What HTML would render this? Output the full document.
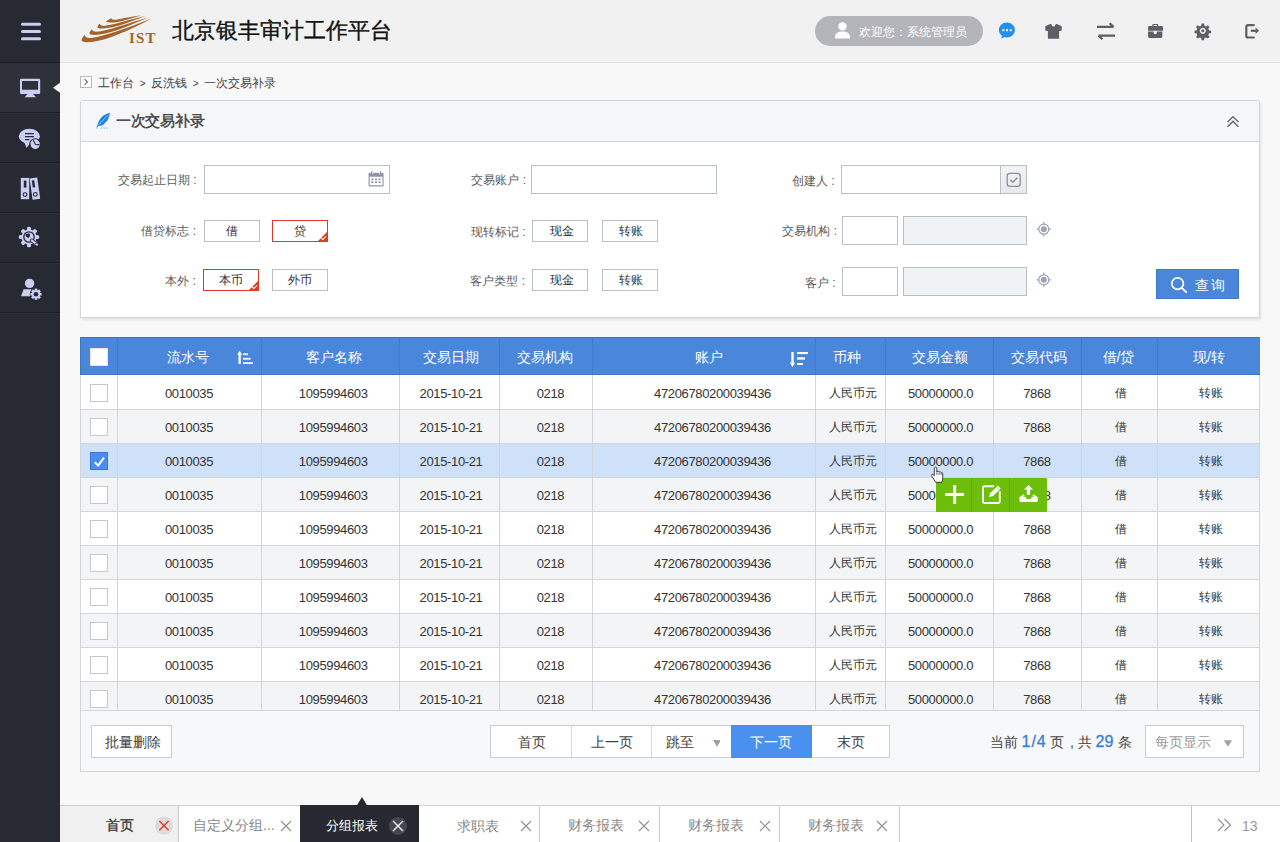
<!DOCTYPE html>
<html><head><meta charset="utf-8">
<style>
*{box-sizing:border-box;margin:0;padding:0}
html,body{width:1280px;height:842px;overflow:hidden}
body{position:relative;background:#f8f8f8;font-family:"Liberation Sans",sans-serif;color:#333}
.a{position:absolute}
#side{left:0;top:0;width:60px;height:842px;background:#272a33}
.si{position:absolute;left:0;width:60px;height:50px;border-top:1px solid #1d1f25;box-shadow:inset 0 1px 0 #2d3037}
#hdr{left:60px;top:0;width:1220px;height:63px;background:#f1f1f1;border-bottom:1px solid #e1e1e1}
.lbl{position:absolute;font-size:12px;color:#5c5c5c;text-align:right;white-space:nowrap}
.inp{position:absolute;border:1px solid #b9bec7;background:#fff;height:29px}
.tg{position:absolute;width:56px;height:22px;border:1px solid #b9bec7;background:#fff;font-size:12px;color:#333;text-align:center;line-height:20px}
.tg.on{border-color:#e03a26}
.th{position:absolute;top:339px;height:37px;line-height:37px;text-align:center;color:#fff;font-size:14px;white-space:nowrap}
.td{position:absolute;height:33px;padding-top:1px;line-height:33px;text-align:center;color:#333;font-size:13px;letter-spacing:-0.35px;white-space:nowrap}
.td.cj{font-size:12px;letter-spacing:0}
.btn{position:absolute;background:#fff;border:1px solid #c9ccd1;font-size:14px;color:#444;text-align:center;line-height:31px;white-space:nowrap}
.pg{position:absolute;top:727px;height:31px;line-height:31px;font-size:14px;color:#444;text-align:center;white-space:nowrap}
.tb{position:absolute;top:817px;font-size:14px;white-space:nowrap}
.pi{position:absolute;top:734px;font-size:14px;line-height:16px;color:#444;white-space:nowrap}
.pn{font-size:16px;color:#3b7fd4;top:733px;line-height:18px;-webkit-text-stroke:0.3px #3b7fd4}
.tg.on:after{content:"";position:absolute;right:-1px;bottom:-1px;width:0;height:0;border-left:11px solid transparent;border-bottom:11px solid #e03a26}
.ck{position:absolute;right:1px;bottom:2px;width:5px;height:3px;border-left:1.2px solid #fff;border-bottom:1.2px solid #fff;transform:rotate(-45deg);z-index:2}
</style></head><body>

<!-- SIDEBAR -->
<div id="side" class="a">
  <div class="si" style="top:62px;background:#2e3139"></div>
  <div class="si" style="top:112px"></div>
  <div class="si" style="top:162px"></div>
  <div class="si" style="top:212px"></div>
  <div class="si" style="top:262px"></div>
  <div class="si" style="top:312px;height:2px"></div>
</div>
<svg class="a" style="left:0;top:0" width="60" height="320" viewBox="0 0 60 320">
 <g fill="#c8cff3">
  <rect x="21" y="22.7" width="20" height="3" rx="1.5"/>
  <rect x="21" y="30" width="20" height="3" rx="1.5"/>
  <rect x="21" y="37.3" width="20" height="3" rx="1.5"/>
  <!-- monitor -->
  <path fill-rule="evenodd" d="M21.2 78.8h17.8a1.2 1.2 0 0 1 1.2 1.2v12.8a1.2 1.2 0 0 1-1.2 1.2h-17.8a1.2 1.2 0 0 1-1.2-1.2v-12.8a1.2 1.2 0 0 1 1.2-1.2zM22 81v8.8h16.1v-8.8z"/>
  <path d="M27.5 94h5.5l3 3.2h-11.3z"/>
  <!-- chat -->
  <ellipse cx="29.35" cy="136.3" rx="10.55" ry="7.5"/>
  <path d="M24 141.5l2.6 6.5 3.4-4.8z"/>
  <circle cx="35.2" cy="144.3" r="4.8"/>
 </g>
 <g stroke="#272a33" stroke-width="1.1" fill="none">
  <path d="M25 133.6h9M25 136.6h9M25 139.6h4.3"/>
  <circle cx="35.2" cy="144.3" r="5.5"/>
  <path d="M33.3 140.2l2 4.1 4.4.6" />
 </g>
 <!-- binders -->
 <g fill="#c8cff3">
  <rect x="20.8" y="177.9" width="8.4" height="21.3"/>
  <path d="M29.6 178.6l7.6-1 3 21.1-7.6 1z"/>
 </g>
 <g fill="#272a33">
  <rect x="23.8" y="180.6" width="2.6" height="7"/>
  <path d="M31.8 180.6l2.4-.3 1 7-2.4.3z"/>
 </g>
 <g fill="none" stroke="#272a33" stroke-width="1.1">
  <circle cx="25" cy="194.6" r="1.9"/>
  <circle cx="35.3" cy="194.4" r="1.9"/>
 </g>
 <!-- gear wrench -->
 <g fill="#c8cff3">
  <circle cx="29" cy="237" r="7.6"/>
  <g id="teeth">
   <rect x="27" y="226.8" width="4" height="4" rx="1.5"/>
   <rect x="27" y="243.2" width="4" height="4" rx="1.5"/>
   <rect x="18.8" y="235" width="4" height="4" rx="1.5"/>
   <rect x="35.2" y="235" width="4" height="4" rx="1.5"/>
   <rect x="27" y="226.8" width="4" height="4" rx="1.5" transform="rotate(45 29 237)"/>
   <rect x="27" y="226.8" width="4" height="4" rx="1.5" transform="rotate(-45 29 237)"/>
   <rect x="27" y="243.2" width="4" height="4" rx="1.5" transform="rotate(45 29 237)"/>
   <rect x="27" y="243.2" width="4" height="4" rx="1.5" transform="rotate(-45 29 237)"/>
  </g>
 </g>
 <circle cx="29" cy="237" r="5.2" fill="none" stroke="#272a33" stroke-width="1.3"/>
 <path d="M25.6 234.2a3 3 0 0 0 3.2 3.6a3 3 0 0 0 .3-4.6z" fill="#272a33"/>
 <path d="M31.8 240.4l5.2 4.3" stroke="#272a33" stroke-width="3.8" stroke-linecap="round"/>
 <path d="M31.8 240.4l5.2 4.3" stroke="#c8cff3" stroke-width="2.1" stroke-linecap="round"/>
 <circle cx="35.8" cy="243.6" r=".6" fill="#272a33"/>
 <!-- user gear -->
 <g fill="#c8cff3">
  <circle cx="29.6" cy="283.4" r="4.7"/>
  <path d="M23.6 289.3h7.8v7h-10.4z"/>
 </g>
 <circle cx="36" cy="294.2" r="6.2" fill="#272a33"/>
 <circle cx="36" cy="294.2" r="4.2" fill="#c8cff3"/>
 <g fill="#c8cff3" transform="translate(36 294.2)">
  <rect x="-1.3" y="-5.6" width="2.6" height="2.6"/>
  <rect x="-1.3" y="3" width="2.6" height="2.6"/>
  <rect x="-5.6" y="-1.3" width="2.6" height="2.6"/>
  <rect x="3" y="-1.3" width="2.6" height="2.6"/>
  <rect x="-1.3" y="-5.6" width="2.6" height="2.6" transform="rotate(45)"/>
  <rect x="-1.3" y="-5.6" width="2.6" height="2.6" transform="rotate(-45)"/>
  <rect x="-1.3" y="3" width="2.6" height="2.6" transform="rotate(45)"/>
  <rect x="-1.3" y="3" width="2.6" height="2.6" transform="rotate(-45)"/>
 </g>
 <circle cx="36" cy="294.2" r="2.3" fill="#272a33"/>
 <path d="M53 87.7l7-5v10z" fill="#f8f8f9"/>
</svg>
<!-- HEADER -->
<div id="hdr" class="a"></div>
<svg class="a" style="left:78px;top:10px" width="80" height="38" viewBox="78 10 80 38">
 <g fill="#a3642c">
  <path d="M84.5 35C82.3 37.5 80.2 40.8 83.2 41.8C97 44.5 128 31.5 151.5 18.4C128 28 100 37.6 89 38.1C86.8 38.1 85.5 36.8 84.5 35Z"/>
  <path d="M91.8 29.6C89.6 31.8 88 34.2 91.6 34.8C107 36 128 26 148.5 17.2C127 23.5 108 31 96 31.7C94 31.7 92.8 31 91.8 29.6Z"/>
  <path d="M99.6 23.8C97.6 25.8 96 28 99.5 28.4C113 29.5 128 22.5 145.5 16.1C128 19.8 114 25.3 103.5 25.9C101.6 25.9 100.5 25 99.6 23.8Z"/>
  <path d="M111.3 18.2C108.5 19.6 104.2 21.6 107.5 22.3C118 23.3 128 19 140.8 15.4C128 16.8 119 19.5 114.3 19.8C112.7 19.8 111.8 19.2 111.3 18.2Z"/>
 </g>
 <text x="129" y="42.8" font-family="Liberation Serif" font-size="15" font-weight="bold" fill="#a3642c" letter-spacing="1.1">IST</text>
</svg>
<div class="a" style="left:171.5px;top:15.5px;font-size:22px;color:#111;-webkit-text-stroke:0.35px #111;white-space:nowrap">北京银丰审计工作平台</div>
<div class="a" style="left:815px;top:16px;width:168px;height:30px;border-radius:15px;background:#b4b4bb"></div>
<svg class="a" style="left:833px;top:20px" width="20" height="20" viewBox="833 20 20 20">
 <circle cx="842.5" cy="26.4" r="4.2" fill="#fff"/>
 <path d="M835 38.4v-1.6c0-3.2 3-5.2 7.5-5.2s7.5 2 7.5 5.2v1.6z" fill="#fff"/>
</svg>
<div class="a" style="left:859px;top:24px;font-size:12px;color:#fff;white-space:nowrap">欢迎您：系统管理员</div>
<svg class="a" style="left:990px;top:14px" width="280" height="34" viewBox="990 14 280 34">
 <!-- message -->
 <path d="M1006.9 22.6c4.5 0 8 3.3 8 7.4s-3.5 7.4-8 7.4c-.9 0-1.7-.1-2.5-.4l-3.1 1.8.6-3.1c-1.9-1.4-3-3.4-3-5.7 0-4.1 3.5-7.4 8-7.4z" fill="#2290ec"/>
 <g fill="#fff"><rect x="1002.4" y="29.2" width="2" height="2"/><rect x="1006" y="29.2" width="2" height="2"/><rect x="1009.7" y="29.2" width="2" height="2"/></g>
 <g fill="#5e5e66">
  <!-- shirt -->
  <path d="M1050 24h1.2c.5 1.6 1.3 2.6 2.3 2.6s1.8-1 2.3-2.6h1.2l4.7 2.2v4.4l-2.6.6v7.6h-11.2v-7.6l-2.6-.6v-4.4z"/>
  <!-- briefcase -->
  <path fill-rule="evenodd" d="M1152.4 26v-1.2c0-.5.4-.9.9-.9h3.9c.5 0 .9.4.9.9v1.2h3.6c.7 0 1.3.6 1.3 1.3v3.4h-14.9v-3.4c0-.7.6-1.3 1.3-1.3zM1153.7 25.1v.9h3.1v-.9z"/>
  <path d="M1148.1 31.6h5.4v.9a1.7 1.7 0 0 0 3.4 0v-.9h5.4v5c0 .7-.6 1.3-1.3 1.3h-11.6c-.7 0-1.3-.6-1.3-1.3z"/>
  <!-- gear -->
  <path fill-rule="evenodd" d="M1202.8 23.6l1.2 0 .5 2.2 1.4.6 1.9-1.2 1.7 1.7-1.2 1.9.6 1.4 2.2.5v2.4l-2.2.5-.6 1.4 1.2 1.9-1.7 1.7-1.9-1.2-1.4.6-.5 2.2h-2.4l-.5-2.2-1.4-.6-1.9 1.2-1.7-1.7 1.2-1.9-.6-1.4-2.2-.5v-2.4l2.2-.5.6-1.4-1.2-1.9 1.7-1.7 1.9 1.2 1.4-.6.5-2.2zM1202.8 27.7a3.1 3.1 0 1 0 .01 0z"/>
  <circle cx="1202.8" cy="30.8" r="1.5"/>
 </g>
 <g fill="none" stroke="#5e5e66" stroke-width="2.2">
  <path d="M1097 26.9h16.5M1109.6 23.2l4 3.7"/>
  <path d="M1115 35.6h-16.5M1102.4 39.3l-4-3.7"/>
  <path d="M1253.8 25.1h-5.7c-1 0-1.8.8-1.8 1.8v8.8c0 1 .8 1.8 1.8 1.8h5.7" stroke-linecap="round"/>
  <path d="M1250.8 30.8h6"/>
 </g>
 <path d="M1255.6 27.6l3.4 3.2-3.4 3.2z" fill="#5e5e66"/>
</svg>
<!-- BREADCRUMB -->
<div class="a" style="left:80px;top:76px;width:12px;height:12px;border:1px solid #b9b9b9;background:#fff"></div>
<svg class="a" style="left:80px;top:76px" width="12" height="12"><path d="M4.6 3.2l2.8 2.8-2.8 2.8" fill="none" stroke="#666" stroke-width="1.1"/></svg>
<div class="a" style="left:98px;top:75px;font-size:12px;color:#444;white-space:nowrap;word-spacing:2.3px">工作台 <span style="font-size:10px">&gt;</span> 反洗钱 <span style="font-size:10px">&gt;</span> 一次交易补录</div>
<!-- QUERY PANEL -->
<div class="a" style="left:80px;top:100px;width:1180px;height:218px;background:#fff;border:1px solid #d3d5d9;border-radius:3px 3px 0 0;box-shadow:1px 2px 3px rgba(0,0,0,.09)"></div>
<div class="a" style="left:81px;top:101px;width:1178px;height:41px;background:#f5f6f8;border-bottom:1px solid #d3d5d9;border-radius:3px 3px 0 0"></div>
<svg class="a" style="left:94px;top:110px" width="20" height="22" viewBox="94 110 20 22">
 <path d="M110 113C106 113.6 101.6 116.2 99.4 120.2C98.3 122.2 97.7 124 97.3 125.4L96.5 127L97.3 127.4L98.3 125.9C100.6 126.1 103.3 125.3 105.1 123.6L103.9 123.3L106.2 122C108 120 109.3 116.5 110 113Z" fill="#1a84e4"/>
 <path d="M108.2 115.2C105 118 101.5 121.5 98.6 125" fill="none" stroke="#f5f6f8" stroke-width=".6"/>
 <g fill="#4a9be8"><rect x="96.5" y="127.6" width="1" height="1"/><rect x="100.7" y="127.6" width="1" height="1"/><rect x="103.6" y="127.6" width="1" height="1"/><rect x="106.2" y="127.6" width="1" height="1"/></g>
</svg>
<div class="a" style="left:116px;top:112px;font-size:15px;color:#444;-webkit-text-stroke:0.45px #444;letter-spacing:-0.3px;white-space:nowrap">一次交易补录</div>
<svg class="a" style="left:1224px;top:112px" width="18" height="18" viewBox="1224 112 18 18">
 <path d="M1227.5 122l5.5-5.3 5.5 5.3M1227.5 126.7l5.5-5.3 5.5 5.3" fill="none" stroke="#6b6e73" stroke-width="1.5"/>
</svg>

<div class="lbl" style="left:99.5px;top:172px;width:97px">交易起止日期 :</div>
<div class="inp" style="left:204px;top:165px;width:186px"></div>
<svg class="a" style="left:367px;top:170px" width="18" height="18" viewBox="367 170 18 18">
 <path fill="#8e93a6" fill-rule="evenodd" d="M369.8 172.8h1.7v-1.2h.9v1.2h7.4v-1.2h.9v1.2h1.7c.7 0 1.2.5 1.2 1.2v11.4c0 .7-.5 1.2-1.2 1.2h-12.6c-.7 0-1.2-.5-1.2-1.2v-11.4c0-.7.5-1.2 1.2-1.2zM369.7 176.7v8.6h12.8v-8.6z"/>
 <g fill="#8e93a6"><rect x="371.3" y="178.6" width="2.2" height="1.6"/><rect x="375" y="178.6" width="2.2" height="1.6"/><rect x="378.6" y="178.6" width="2" height="1.6"/><rect x="371.3" y="181.4" width="2.2" height="1.6"/><rect x="375" y="181.4" width="2.2" height="1.6"/><rect x="378.6" y="181.4" width="2" height="1.6"/></g>
 <g fill="#fff"><rect x="372.3" y="171.6" width="1" height="2.4"/><rect x="378.9" y="171.6" width="1" height="2.4"/></g>
 <g fill="#8e93a6"><rect x="371.5" y="171" width=".9" height="2.2"/><rect x="379.8" y="171" width=".9" height="2.2"/></g>
</svg>
<div class="lbl" style="left:99px;top:223px;width:97px">借贷标志 :</div>
<div class="tg" style="left:204px;top:220px">借</div>
<div class="tg on" style="left:272px;top:220px">贷<i class="ck"></i></div>
<div class="lbl" style="left:99px;top:273px;width:97px">本外 :</div>
<div class="tg on" style="left:203px;top:269px">本币<i class="ck"></i></div>
<div class="tg" style="left:272px;top:269px">外币</div>

<div class="lbl" style="left:430px;top:172px;width:96px">交易账户 :</div>
<div class="inp" style="left:531px;top:165px;width:186px"></div>
<div class="lbl" style="left:429.5px;top:223.5px;width:96px">现转标记 :</div>
<div class="tg" style="left:532px;top:220px;padding-left:3px">现金</div>
<div class="tg" style="left:602px;top:220px;padding-left:2px">转账</div>
<div class="lbl" style="left:429px;top:273px;width:96px">客户类型 :</div>
<div class="tg" style="left:532px;top:269px;padding-left:3px">现金</div>
<div class="tg" style="left:602px;top:269px;padding-left:2px">转账</div>

<div class="lbl" style="left:738.5px;top:173px;width:96px">创建人 :</div>
<div class="inp" style="left:841px;top:165px;width:186px"></div>
<div class="a" style="left:1000px;top:165px;width:27px;height:29px;background:linear-gradient(#f3f3f4,#e9eaec);border:1px solid #b9bec7"></div>
<svg class="a" style="left:1005px;top:171px" width="18" height="18" viewBox="1005 171 18 18">
 <rect x="1007.2" y="173.4" width="13" height="13" rx="2.6" fill="none" stroke="#8a8f9c" stroke-width="1.3"/>
 <path d="M1010.3 179.8l2.6 2.5 4.4-4.6" fill="none" stroke="#8a8f9c" stroke-width="1.5"/>
</svg>
<div class="lbl" style="left:741px;top:223px;width:96px">交易机构 :</div>
<div class="inp" style="left:842px;top:216px;width:56px"></div>
<div class="inp" style="left:903px;top:216px;width:124px;background:#f0f3f6"></div>
<div class="lbl" style="left:739.5px;top:275px;width:96px">客户 :</div>
<div class="inp" style="left:842px;top:267px;width:56px"></div>
<div class="inp" style="left:903px;top:267px;width:124px;background:#f0f3f6"></div>
<svg class="a" style="left:1034px;top:219px" width="20" height="72" viewBox="1034 219 20 72">
 <g id="loc" fill="none" stroke="#9ea3b3" stroke-width="1.2"><circle cx="1043.8" cy="229.2" r="5"/><path d="M1043.8 222v2.4M1043.8 234v2.4M1036.6 229.2h2.4M1048.6 229.2h2.4"/></g>
 <circle cx="1043.8" cy="229.2" r="3" fill="#9ea3b3"/>
 <g fill="none" stroke="#9ea3b3" stroke-width="1.2"><circle cx="1043.8" cy="279.8" r="5"/><path d="M1043.8 272.6v2.4M1043.8 284.6v2.4M1036.6 279.8h2.4M1048.6 279.8h2.4"/></g>
 <circle cx="1043.8" cy="279.8" r="3" fill="#9ea3b3"/>
</svg>

<div class="a" style="left:1156px;top:269px;width:83px;height:30px;background:#4a87da;border:1px solid #3f7acb"></div>
<svg class="a" style="left:1168px;top:274px" width="22" height="22" viewBox="1168 274 22 22">
 <circle cx="1177.6" cy="283.6" r="5.8" fill="none" stroke="#fff" stroke-width="1.7"/>
 <path d="M1181.8 287.8l4.4 4.4" stroke="#fff" stroke-width="1.8" stroke-linecap="round"/>
</svg>
<div class="a" style="left:1195px;top:276.5px;font-size:14px;color:#fff;letter-spacing:1.5px;white-space:nowrap">查询</div>

<!-- TABLE -->
<div class="a" style="left:80px;top:337px;width:1180px;height:435px;border:1px solid #d3d5d9;background:#f7f8fa"></div>
<div class="a" style="left:80px;top:337px;width:1180px;height:38px;background:#4a87da;border-bottom:1px solid #3b76c8;border-top:1px solid #3471c6;border-left:1px solid #3b76c8"></div>
<div class="a" style="left:117px;top:337px;width:1px;height:37px;background:#3f7bcb"></div>
<div class="a" style="left:261px;top:337px;width:1px;height:37px;background:#3f7bcb"></div>
<div class="a" style="left:399px;top:337px;width:1px;height:37px;background:#3f7bcb"></div>
<div class="a" style="left:499px;top:337px;width:1px;height:37px;background:#3f7bcb"></div>
<div class="a" style="left:592px;top:337px;width:1px;height:37px;background:#3f7bcb"></div>
<div class="a" style="left:815px;top:337px;width:1px;height:37px;background:#3f7bcb"></div>
<div class="a" style="left:885px;top:337px;width:1px;height:37px;background:#3f7bcb"></div>
<div class="a" style="left:993px;top:337px;width:1px;height:37px;background:#3f7bcb"></div>
<div class="a" style="left:1081px;top:337px;width:1px;height:37px;background:#3f7bcb"></div>
<div class="a" style="left:1157px;top:337px;width:1px;height:37px;background:#3f7bcb"></div>
<div class="a" style="left:90px;top:348px;width:18px;height:18px;background:#fff;border:1px solid #e8e2d8"></div>
<div class="th" style="left:115.6px;width:144px">流水号</div>
<div class="th" style="left:264.6px;width:138px">客户名称</div>
<div class="th" style="left:400.7px;width:100px">交易日期</div>
<div class="th" style="left:498px;width:93px">交易机构</div>
<div class="th" style="left:597.7px;width:223px">账户</div>
<div class="th" style="left:812px;width:70px">币种</div>
<div class="th" style="left:885.7px;width:108px">交易金额</div>
<div class="th" style="left:994.9px;width:88px">交易代码</div>
<div class="th" style="left:1080.5px;width:76px">借/贷</div>
<div class="th" style="left:1157.85px;width:102px">现/转</div>
<div class="a" style="left:81px;top:375px;width:1178px;height:1px;background:#fff"></div>
<div class="a" style="left:117px;top:375px;width:1px;height:1px;background:#d3d5d9"></div>
<div class="a" style="left:261px;top:375px;width:1px;height:1px;background:#d3d5d9"></div>
<div class="a" style="left:399px;top:375px;width:1px;height:1px;background:#d3d5d9"></div>
<div class="a" style="left:499px;top:375px;width:1px;height:1px;background:#d3d5d9"></div>
<div class="a" style="left:592px;top:375px;width:1px;height:1px;background:#d3d5d9"></div>
<div class="a" style="left:815px;top:375px;width:1px;height:1px;background:#d3d5d9"></div>
<div class="a" style="left:885px;top:375px;width:1px;height:1px;background:#d3d5d9"></div>
<div class="a" style="left:993px;top:375px;width:1px;height:1px;background:#d3d5d9"></div>
<div class="a" style="left:1081px;top:375px;width:1px;height:1px;background:#d3d5d9"></div>
<div class="a" style="left:1157px;top:375px;width:1px;height:1px;background:#d3d5d9"></div>
<div class="a" style="left:81px;top:376px;width:1178px;height:334px;overflow:hidden">
<div class="a" style="left:0;top:0px;width:1178px;height:34px;background:#fff;border-bottom:1px solid #d3d5d9"></div>
<div class="a" style="left:9px;top:8px;width:18px;height:18px;background:#fff;border:1px solid #c6c7ca"></div>
<div class="td" style="left:36px;top:0px;width:144px">0010035</div>
<div class="td" style="left:183.2px;top:0px;width:138px">1095994603</div>
<div class="td" style="left:320px;top:0px;width:100px">2015-10-21</div>
<div class="td" style="left:423px;top:0px;width:93px">0218</div>
<div class="td" style="left:520px;top:0px;width:223px">47206780200039436</div>
<div class="td cj" style="left:737px;top:0px;width:70px">人民币元</div>
<div class="td" style="left:805.5px;top:0px;width:108px">50000000.0</div>
<div class="td" style="left:912px;top:0px;width:88px">7868</div>
<div class="td cj" style="left:1001.6px;top:0px;width:76px">借</div>
<div class="td cj" style="left:1078.8px;top:0px;width:102px">转账</div>
<div class="a" style="left:0;top:34px;width:1178px;height:34px;background:#f3f4f6;border-bottom:1px solid #d3d5d9"></div>
<div class="a" style="left:9px;top:42px;width:18px;height:18px;background:#fff;border:1px solid #c6c7ca"></div>
<div class="td" style="left:36px;top:34px;width:144px">0010035</div>
<div class="td" style="left:183.2px;top:34px;width:138px">1095994603</div>
<div class="td" style="left:320px;top:34px;width:100px">2015-10-21</div>
<div class="td" style="left:423px;top:34px;width:93px">0218</div>
<div class="td" style="left:520px;top:34px;width:223px">47206780200039436</div>
<div class="td cj" style="left:737px;top:34px;width:70px">人民币元</div>
<div class="td" style="left:805.5px;top:34px;width:108px">50000000.0</div>
<div class="td" style="left:912px;top:34px;width:88px">7868</div>
<div class="td cj" style="left:1001.6px;top:34px;width:76px">借</div>
<div class="td cj" style="left:1078.8px;top:34px;width:102px">转账</div>
<div class="a" style="left:0;top:68px;width:1178px;height:34px;background:#cee1f8;border-bottom:1px solid #d3d5d9"></div>
<div class="a" style="left:9px;top:76px;width:18px;height:18px;background:#4a8cf0;border:1px solid #3a76d4"><svg width="16" height="16" viewBox="0 0 16 16" style="position:absolute;left:0;top:0"><path d="M3.8 9.2 L7.2 12.4 L13 4.6" fill="none" stroke="#fff" stroke-width="2"/></svg></div>
<div class="td" style="left:36px;top:68px;width:144px">0010035</div>
<div class="td" style="left:183.2px;top:68px;width:138px">1095994603</div>
<div class="td" style="left:320px;top:68px;width:100px">2015-10-21</div>
<div class="td" style="left:423px;top:68px;width:93px">0218</div>
<div class="td" style="left:520px;top:68px;width:223px">47206780200039436</div>
<div class="td cj" style="left:737px;top:68px;width:70px">人民币元</div>
<div class="td" style="left:805.5px;top:68px;width:108px">50000000.0</div>
<div class="td" style="left:912px;top:68px;width:88px">7868</div>
<div class="td cj" style="left:1001.6px;top:68px;width:76px">借</div>
<div class="td cj" style="left:1078.8px;top:68px;width:102px">转账</div>
<div class="a" style="left:0;top:102px;width:1178px;height:34px;background:#f3f4f6;border-bottom:1px solid #d3d5d9"></div>
<div class="a" style="left:9px;top:110px;width:18px;height:18px;background:#fff;border:1px solid #c6c7ca"></div>
<div class="td" style="left:36px;top:102px;width:144px">0010035</div>
<div class="td" style="left:183.2px;top:102px;width:138px">1095994603</div>
<div class="td" style="left:320px;top:102px;width:100px">2015-10-21</div>
<div class="td" style="left:423px;top:102px;width:93px">0218</div>
<div class="td" style="left:520px;top:102px;width:223px">47206780200039436</div>
<div class="td cj" style="left:737px;top:102px;width:70px">人民币元</div>
<div class="td" style="left:805.5px;top:102px;width:108px">50000000.0</div>
<div class="td" style="left:912px;top:102px;width:88px">7868</div>
<div class="td cj" style="left:1001.6px;top:102px;width:76px">借</div>
<div class="td cj" style="left:1078.8px;top:102px;width:102px">转账</div>
<div class="a" style="left:0;top:136px;width:1178px;height:34px;background:#fff;border-bottom:1px solid #d3d5d9"></div>
<div class="a" style="left:9px;top:144px;width:18px;height:18px;background:#fff;border:1px solid #c6c7ca"></div>
<div class="td" style="left:36px;top:136px;width:144px">0010035</div>
<div class="td" style="left:183.2px;top:136px;width:138px">1095994603</div>
<div class="td" style="left:320px;top:136px;width:100px">2015-10-21</div>
<div class="td" style="left:423px;top:136px;width:93px">0218</div>
<div class="td" style="left:520px;top:136px;width:223px">47206780200039436</div>
<div class="td cj" style="left:737px;top:136px;width:70px">人民币元</div>
<div class="td" style="left:805.5px;top:136px;width:108px">50000000.0</div>
<div class="td" style="left:912px;top:136px;width:88px">7868</div>
<div class="td cj" style="left:1001.6px;top:136px;width:76px">借</div>
<div class="td cj" style="left:1078.8px;top:136px;width:102px">转账</div>
<div class="a" style="left:0;top:170px;width:1178px;height:34px;background:#f3f4f6;border-bottom:1px solid #d3d5d9"></div>
<div class="a" style="left:9px;top:178px;width:18px;height:18px;background:#fff;border:1px solid #c6c7ca"></div>
<div class="td" style="left:36px;top:170px;width:144px">0010035</div>
<div class="td" style="left:183.2px;top:170px;width:138px">1095994603</div>
<div class="td" style="left:320px;top:170px;width:100px">2015-10-21</div>
<div class="td" style="left:423px;top:170px;width:93px">0218</div>
<div class="td" style="left:520px;top:170px;width:223px">47206780200039436</div>
<div class="td cj" style="left:737px;top:170px;width:70px">人民币元</div>
<div class="td" style="left:805.5px;top:170px;width:108px">50000000.0</div>
<div class="td" style="left:912px;top:170px;width:88px">7868</div>
<div class="td cj" style="left:1001.6px;top:170px;width:76px">借</div>
<div class="td cj" style="left:1078.8px;top:170px;width:102px">转账</div>
<div class="a" style="left:0;top:204px;width:1178px;height:34px;background:#fff;border-bottom:1px solid #d3d5d9"></div>
<div class="a" style="left:9px;top:212px;width:18px;height:18px;background:#fff;border:1px solid #c6c7ca"></div>
<div class="td" style="left:36px;top:204px;width:144px">0010035</div>
<div class="td" style="left:183.2px;top:204px;width:138px">1095994603</div>
<div class="td" style="left:320px;top:204px;width:100px">2015-10-21</div>
<div class="td" style="left:423px;top:204px;width:93px">0218</div>
<div class="td" style="left:520px;top:204px;width:223px">47206780200039436</div>
<div class="td cj" style="left:737px;top:204px;width:70px">人民币元</div>
<div class="td" style="left:805.5px;top:204px;width:108px">50000000.0</div>
<div class="td" style="left:912px;top:204px;width:88px">7868</div>
<div class="td cj" style="left:1001.6px;top:204px;width:76px">借</div>
<div class="td cj" style="left:1078.8px;top:204px;width:102px">转账</div>
<div class="a" style="left:0;top:238px;width:1178px;height:34px;background:#f3f4f6;border-bottom:1px solid #d3d5d9"></div>
<div class="a" style="left:9px;top:246px;width:18px;height:18px;background:#fff;border:1px solid #c6c7ca"></div>
<div class="td" style="left:36px;top:238px;width:144px">0010035</div>
<div class="td" style="left:183.2px;top:238px;width:138px">1095994603</div>
<div class="td" style="left:320px;top:238px;width:100px">2015-10-21</div>
<div class="td" style="left:423px;top:238px;width:93px">0218</div>
<div class="td" style="left:520px;top:238px;width:223px">47206780200039436</div>
<div class="td cj" style="left:737px;top:238px;width:70px">人民币元</div>
<div class="td" style="left:805.5px;top:238px;width:108px">50000000.0</div>
<div class="td" style="left:912px;top:238px;width:88px">7868</div>
<div class="td cj" style="left:1001.6px;top:238px;width:76px">借</div>
<div class="td cj" style="left:1078.8px;top:238px;width:102px">转账</div>
<div class="a" style="left:0;top:272px;width:1178px;height:34px;background:#fff;border-bottom:1px solid #d3d5d9"></div>
<div class="a" style="left:9px;top:280px;width:18px;height:18px;background:#fff;border:1px solid #c6c7ca"></div>
<div class="td" style="left:36px;top:272px;width:144px">0010035</div>
<div class="td" style="left:183.2px;top:272px;width:138px">1095994603</div>
<div class="td" style="left:320px;top:272px;width:100px">2015-10-21</div>
<div class="td" style="left:423px;top:272px;width:93px">0218</div>
<div class="td" style="left:520px;top:272px;width:223px">47206780200039436</div>
<div class="td cj" style="left:737px;top:272px;width:70px">人民币元</div>
<div class="td" style="left:805.5px;top:272px;width:108px">50000000.0</div>
<div class="td" style="left:912px;top:272px;width:88px">7868</div>
<div class="td cj" style="left:1001.6px;top:272px;width:76px">借</div>
<div class="td cj" style="left:1078.8px;top:272px;width:102px">转账</div>
<div class="a" style="left:0;top:306px;width:1178px;height:34px;background:#f3f4f6;border-bottom:1px solid #d3d5d9"></div>
<div class="a" style="left:9px;top:314px;width:18px;height:18px;background:#fff;border:1px solid #c6c7ca"></div>
<div class="td" style="left:36px;top:306px;width:144px">0010035</div>
<div class="td" style="left:183.2px;top:306px;width:138px">1095994603</div>
<div class="td" style="left:320px;top:306px;width:100px">2015-10-21</div>
<div class="td" style="left:423px;top:306px;width:93px">0218</div>
<div class="td" style="left:520px;top:306px;width:223px">47206780200039436</div>
<div class="td cj" style="left:737px;top:306px;width:70px">人民币元</div>
<div class="td" style="left:805.5px;top:306px;width:108px">50000000.0</div>
<div class="td" style="left:912px;top:306px;width:88px">7868</div>
<div class="td cj" style="left:1001.6px;top:306px;width:76px">借</div>
<div class="td cj" style="left:1078.8px;top:306px;width:102px">转账</div>
<div class="a" style="left:36px;top:0;width:1px;height:334px;background:#d3d5d9"></div>
<div class="a" style="left:180px;top:0;width:1px;height:334px;background:#d3d5d9"></div>
<div class="a" style="left:318px;top:0;width:1px;height:334px;background:#d3d5d9"></div>
<div class="a" style="left:418px;top:0;width:1px;height:334px;background:#d3d5d9"></div>
<div class="a" style="left:511px;top:0;width:1px;height:334px;background:#d3d5d9"></div>
<div class="a" style="left:734px;top:0;width:1px;height:334px;background:#d3d5d9"></div>
<div class="a" style="left:804px;top:0;width:1px;height:334px;background:#d3d5d9"></div>
<div class="a" style="left:912px;top:0;width:1px;height:334px;background:#d3d5d9"></div>
<div class="a" style="left:1000px;top:0;width:1px;height:334px;background:#d3d5d9"></div>
<div class="a" style="left:1076px;top:0;width:1px;height:334px;background:#d3d5d9"></div>
</div>
<div class="a" style="left:81px;top:710px;width:1178px;height:1px;background:#d3d5d9"></div>
<!-- TABLE HEADER ICONS -->
<svg class="a" style="left:230px;top:345px" width="30" height="24" viewBox="230 345 30 24">
 <path d="M239.6 350.8l2.5 4h-1.3v9.2h-2.3v-9.2h-1.3z" fill="#fff"/>
 <g fill="#fff"><rect x="243" y="353.4" width="5" height="1.7"/><rect x="243" y="357.9" width="7.5" height="1.7"/><rect x="243" y="362.3" width="10" height="1.7"/></g>
</svg>
<svg class="a" style="left:785px;top:345px" width="30" height="24" viewBox="785 345 30 24">
 <path d="M792.5 367l-2.6-4.2h1.4v-10.8h2.4v10.8h1.4z" fill="#fff"/>
 <g fill="#fff"><rect x="797" y="352" width="11" height="2.1"/><rect x="797" y="357.3" width="8" height="2.3"/><rect x="797" y="363" width="6" height="2"/></g>
</svg>

<!-- GREEN TOOLBAR -->
<div class="a" style="left:936px;top:478px;width:111px;height:34px;background:#6dbd0b"></div>
<div class="a" style="left:971px;top:478px;width:1px;height:34px;background:#5fa80a"></div>
<div class="a" style="left:1009px;top:478px;width:1px;height:34px;background:#5fa80a"></div>
<svg class="a" style="left:936px;top:478px" width="111" height="34" viewBox="936 478 111 34">
 <path d="M945.3 494.5h18.8M954.7 485.2v18.8" stroke="#fff" stroke-width="3"/>
 <path d="M994.1 486.3H984.8C983.7 486.3 983 487 983 488.1V501.2C983 502.3 983.7 503 984.8 503H998C999.1 503 999.8 502.3 999.8 501.2V491.3" fill="none" stroke="#fff" stroke-width="1.9"/>
 <path d="M988.8 497L990.2 493.2L997.8 485.6L1000.7 488.5L993.1 496.1Z" fill="#fff"/>
 <path d="M996.2 487.3L999.1 490.2" stroke="#6dbd0b" stroke-width=".5"/>
 <path d="M1023.5 494.2L1019.3 497.4L1019.8 502H1037.5L1038 497.4L1033.6 494.2L1032.4 495.4L1034.6 496.7H1031.8L1031.4 497.8C1031.1 498.6 1030.5 499.1 1029.6 499.1H1027.6C1026.7 499.1 1026.1 498.6 1025.8 497.8L1025.4 496.7H1022.6L1024.7 495.4Z" fill="#fff"/>
 <path d="M1028.5 485l4.7 4.6h-3.1v5.2h-3.3v-5.2h-3z" fill="#fff"/>
</svg>
<!-- CURSOR -->
<svg class="a" style="left:928px;top:465px" width="20" height="22" viewBox="928 465 20 22">
 <path d="M934.3 468.3C934.3 467.5 935 467.1 935.5 467.1C936.1 467.1 936.8 467.5 936.8 468.3L936.8 472C937.1 471.2 938.8 471.2 939.1 472.1C939.4 471.5 940.9 471.6 941.1 472.6C941.6 472.2 942.7 472.6 942.7 473.6L942.7 478.8C942.7 480 942.2 481 941.6 482.3L935.6 482.3L932.1 476.6C931.5 475.6 931.3 475 931.8 474.5C932.3 474 933.3 474.3 934.3 475.6Z" fill="#fff" stroke="#2a2a2a" stroke-width=".9"/>
 <path d="M936.9 472.2v2.8M939.1 472.4v2.6M941.1 472.8v2.3" stroke="#2a2a2a" stroke-width=".7"/>
</svg>

<!-- TABLE FOOTER -->
<div class="btn" style="left:91px;top:725px;width:81px;height:33px;padding-left:2px;line-height:33px">批量删除</div>
<div class="a" style="left:490px;top:725px;width:400px;height:33px;background:#fff;border:1px solid #c9ccd1"></div>
<div class="pg" style="left:491px;width:81px">首页</div>
<div class="a" style="left:571px;top:726px;width:1px;height:31px;background:#d5d7db"></div>
<div class="pg" style="left:572px;width:80px">上一页</div>
<div class="a" style="left:651px;top:726px;width:1px;height:31px;background:#d5d7db"></div>
<div class="pg" style="left:652px;width:79px;text-align:left;padding-left:14px">跳至</div>
<svg class="a" style="left:708px;top:736px" width="12" height="12"><path d="M5 4h8l-4 7z" fill="#9aa1ad"/></svg>
<div class="pg" style="left:731px;width:81px;background:#4a90ee;color:#fff;top:725px;height:33px;line-height:35px;padding-right:2px">下一页</div>
<div class="pg" style="left:812px;width:77px">末页</div>
<div class="pi" style="left:990px">当前</div><div class="pi pn" style="left:1021.5px;letter-spacing:1px">1/4</div><div class="pi" style="left:1050px">页</div><div class="pi" style="left:1070px">,</div><div class="pi" style="left:1078px">共</div><div class="pi pn" style="left:1095.5px">29</div><div class="pi" style="left:1117.5px">条</div>
<div class="a" style="left:1145px;top:725px;width:99px;height:33px;background:#fff;border:1px solid #c9ccd1"></div>
<div class="a" style="left:1155px;top:734px;font-size:14px;color:#9c9c9c;white-space:nowrap">每页显示</div>
<svg class="a" style="left:1221px;top:736px" width="12" height="12"><path d="M2.8 4.2h8.2l-4.1 6.6z" fill="#9aa1ad"/></svg>

<!-- BOTTOM TABS -->
<div class="a" style="left:60px;top:805px;width:1220px;height:37px;background:#fff;border-top:1px solid #cfcfcf"></div>
<div class="a" style="left:60px;top:806px;width:119px;height:36px;background:#f0f0f0;border-right:1px solid #c8c8c8"></div>
<div class="tb" style="left:106px;color:#333;-webkit-text-stroke:0.25px #333">首页</div>
<svg class="a" style="left:154px;top:816px" width="20" height="20" viewBox="154 816 20 20">
 <circle cx="164" cy="825.6" r="9" fill="#dcdcdc"/>
 <path d="M159.4 821l9.2 9.2M168.6 821l-9.2 9.2" stroke="#e2352b" stroke-width="1.3"/>
</svg>
<div class="tb" style="left:193px;color:#888">自定义分组...</div>
<svg class="a" style="left:279px;top:819px" width="14" height="14"><path d="M2 2l10 10M12 2l-10 10" stroke="#909090" stroke-width="1.1"/></svg>
<div class="a" style="left:300px;top:805px;width:119px;height:37px;background:#262930"></div>
<svg class="a" style="left:355px;top:796px" width="14" height="11"><path d="M1.5 10l5.5-9 5.5 9z" fill="#262930"/></svg>
<div class="tb" style="left:326px;color:#fff;font-size:13px;top:817px">分组报表</div>
<svg class="a" style="left:388px;top:816px" width="20" height="20" viewBox="388 816 20 20">
 <circle cx="398" cy="826" r="9" fill="#46484f"/>
 <path d="M393 821l10 10M403 821l-10 10" stroke="#fff" stroke-width="1.3"/>
</svg>
<div class="tb" style="left:457px;color:#888;top:817.5px">求职表</div>
<svg class="a" style="left:519px;top:819px" width="14" height="14"><path d="M2 2l10 10M12 2l-10 10" stroke="#909090" stroke-width="1.1"/></svg>
<div class="a" style="left:539px;top:806px;width:1px;height:36px;background:#cfcfcf"></div>
<div class="tb" style="left:568px;color:#888">财务报表</div>
<svg class="a" style="left:637px;top:819px" width="14" height="14"><path d="M2 2l10 10M12 2l-10 10" stroke="#909090" stroke-width="1.1"/></svg>
<div class="a" style="left:659px;top:806px;width:1px;height:36px;background:#cfcfcf"></div>
<div class="tb" style="left:688px;color:#888">财务报表</div>
<svg class="a" style="left:758px;top:819px" width="14" height="14"><path d="M2 2l10 10M12 2l-10 10" stroke="#909090" stroke-width="1.1"/></svg>
<div class="a" style="left:779px;top:806px;width:1px;height:36px;background:#cfcfcf"></div>
<div class="tb" style="left:808px;color:#888">财务报表</div>
<svg class="a" style="left:875px;top:819px" width="14" height="14"><path d="M2 2l10 10M12 2l-10 10" stroke="#909090" stroke-width="1.1"/></svg>
<div class="a" style="left:899px;top:806px;width:1px;height:36px;background:#cfcfcf"></div>
<div class="a" style="left:1191px;top:806px;width:1px;height:36px;background:#c4c4c4"></div>
<svg class="a" style="left:1216px;top:817px" width="20" height="16"><path d="M2 2l6 6-6 6M8.5 2l6 6-6 6" fill="none" stroke="#909090" stroke-width="1.1"/></svg>
<div class="a" style="left:1242px;top:818px;font-size:14px;color:#999;white-space:nowrap">13</div>
</body></html>
